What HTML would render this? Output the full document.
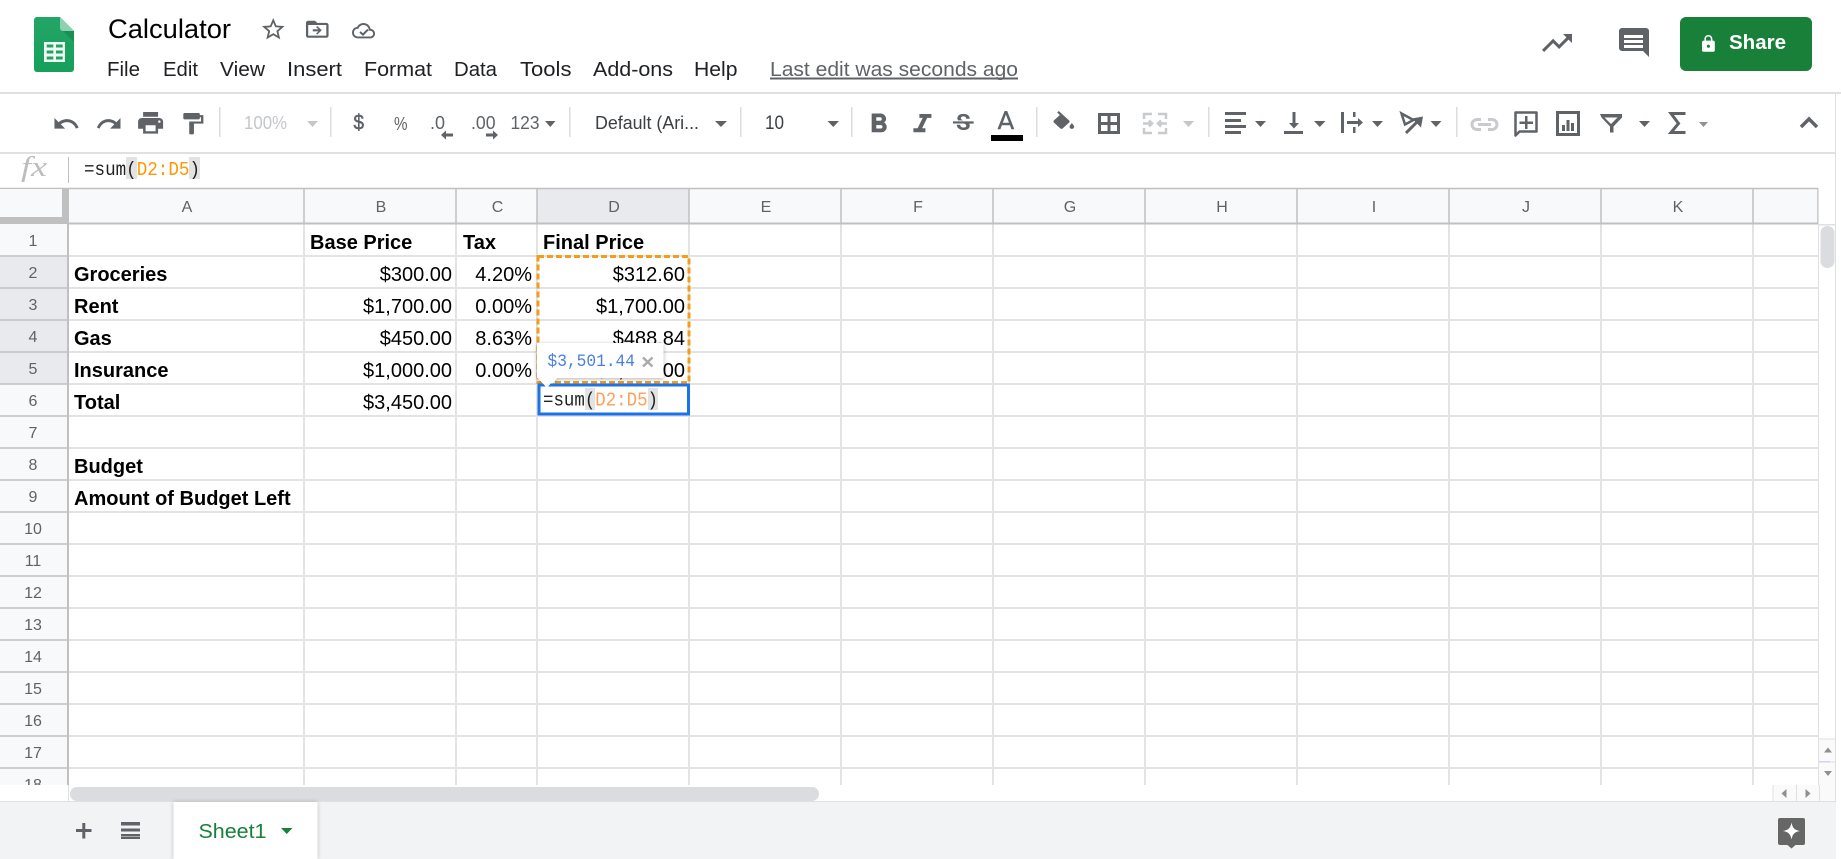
<!DOCTYPE html>
<html><head><meta charset="utf-8"><title>Calculator</title>
<style>
html,body{margin:0;padding:0;background:#fff;overflow:hidden;width:1841px;height:859px}
svg{display:block}
text{font-family:"Liberation Sans",Arial,sans-serif;white-space:pre}
.m{font-size:20px;fill:#202124}
.h{font-size:16px;fill:#5f6368;text-anchor:middle}
.b{font-size:20px;font-weight:bold;fill:#000}
.r{font-size:20px;fill:#000;text-anchor:end}
.c{font-family:"Liberation Mono",monospace!important}
.i{fill:#5f6368}
.d{fill:#c4c6ca}
</style></head><body>
<svg width="1841" height="859" viewBox="0 0 1841 859" xmlns="http://www.w3.org/2000/svg">
<defs>
<filter id="sh" x="-20%" y="-30%" width="140%" height="170%"><feDropShadow dx="0" dy="1" stdDeviation="2" flood-color="#000" flood-opacity=".3"/></filter>
<filter id="ts" x="-10%" y="-10%" width="120%" height="120%"><feDropShadow dx="0" dy="0" stdDeviation="2" flood-color="#000" flood-opacity=".22"/></filter>
<linearGradient id="lg" x1="0" y1="0" x2="0" y2="1"><stop offset="0" stop-color="#23a566"/><stop offset="1" stop-color="#16a05b"/></linearGradient>
</defs>

<!-- Logo -->
<path d="M37 17H60L74 31V69a3 3 0 0 1-3 3H37a3 3 0 0 1-3-3V20a3 3 0 0 1 3-3z" fill="url(#lg)"/>
<path d="M62 30L74 42V31z" fill="#15884f" opacity=".7"/>
<path d="M60 17L74 31H63a3 3 0 0 1-3-3z" fill="#8ed1b1"/>
<rect x="44" y="42" width="21" height="20" fill="#f1f8f4"/>
<path d="M46.700 44.500h6.600v3h-6.600zM56 44.500h6.700v3H56zM46.700 50.500h6.600v3h-6.600zM56 50.500h6.700v3H56zM46.700 56.500h6.600v3h-6.600zM56 56.500h6.700v3H56z" fill="#1fa463"/>

<!-- Title -->
<text x="108" y="38" font-size="27" fill="#000" textLength="123" lengthAdjust="spacingAndGlyphs">Calculator</text>
<path class="i" transform="translate(259.7 15.7) scale(1.13)" d="M22 9.24l-7.19-.62L12 2 9.19 8.63 2 9.24l5.46 4.73L5.82 21 12 17.27 18.18 21l-1.63-7.03L22 9.24zM12 15.4l-3.76 2.27 1-4.28-3.32-2.88 4.38-.38L12 6.1l1.71 4.04 4.38.38-3.32 2.88 1 4.28L12 15.4z"/>
<path class="i" transform="translate(303.7 16.5) scale(1.13 1.06)" d="M20 6h-8l-2-2H4c-1.1 0-2 .9-2 2v12c0 1.1.9 2 2 2h16c1.1 0 2-.9 2-2V8c0-1.1-.9-2-2-2zm0 12H4V8h16v10zM12 9l-1 1 2 2H8v2h5l-2 2 1 1 4-4z"/>
<path class="i" transform="translate(352 19.2) scale(.96)" d="M19.35 10.04C18.67 6.59 15.64 4 12 4 9.11 4 6.6 5.64 5.35 8.04 2.34 8.36 0 10.91 0 14c0 3.31 2.69 6 6 6h13c2.76 0 5-2.24 5-5 0-2.64-2.05-4.78-4.65-4.96zM19 18H6c-2.21 0-4-1.79-4-4s1.79-4 4-4h.71C7.37 7.69 9.48 6 12 6c3.04 0 5.5 2.46 5.5 5.5v.5H19c1.66 0 3 1.34 3 3s-1.34 3-3 3z"/>
<path d="M360 32l3 2.6 5-5" fill="none" stroke="#5f6368" stroke-width="2"/>

<!-- Menu -->
<text class="m" x="107" y="76" textLength="33" lengthAdjust="spacingAndGlyphs">File</text>
<text class="m" x="163" y="76" textLength="35" lengthAdjust="spacingAndGlyphs">Edit</text>
<text class="m" x="220" y="76" textLength="45" lengthAdjust="spacingAndGlyphs">View</text>
<text class="m" x="287" y="76" textLength="55" lengthAdjust="spacingAndGlyphs">Insert</text>
<text class="m" x="364" y="76" textLength="68" lengthAdjust="spacingAndGlyphs">Format</text>
<text class="m" x="454" y="76" textLength="43" lengthAdjust="spacingAndGlyphs">Data</text>
<text class="m" x="520" y="76" textLength="51.500" lengthAdjust="spacingAndGlyphs">Tools</text>
<text class="m" x="593" y="76" textLength="80" lengthAdjust="spacingAndGlyphs">Add-ons</text>
<text class="m" x="694" y="76" textLength="43.500" lengthAdjust="spacingAndGlyphs">Help</text>
<text x="770" y="76" font-size="20" fill="#5f6368" textLength="248" lengthAdjust="spacingAndGlyphs">Last edit was seconds ago</text>
<rect x="770" y="77.500" width="248" height="2" fill="#5f6368"/>

<!-- Top right -->
<path class="i" transform="translate(1539 25) scale(1.5)" d="M16 6l2.29 2.29-4.88 4.88-4-4L2 16.59 3.41 18l6-6 4 4 6.3-6.29L22 12V6z"/>
<path class="i" d="M1622 28h24a3 3 0 0 1 3 3v26l-6-6h-21a3 3 0 0 1-3-3V31a3 3 0 0 1 3-3z"/>
<path d="M1624 35h19v3h-19zM1624 40h19v3h-19zM1624 45h19v3h-19z" fill="#fff"/>
<rect x="1680" y="17" width="132" height="54" rx="6" fill="#188038"/>
<path fill="#fff" transform="translate(1698.8 34.2) scale(.8)" d="M18 8h-1V6c0-2.76-2.24-5-5-5S7 3.24 7 6v2H6c-1.1 0-2 .9-2 2v10c0 1.1.9 2 2 2h12c1.1 0 2-.9 2-2V10c0-1.1-.9-2-2-2zm-6 9c-1.1 0-2-.9-2-2s.9-2 2-2 2 .9 2 2-.9 2-2 2zm3.1-9H8.9V6c0-1.71 1.39-3.1 3.1-3.1 1.71 0 3.1 1.39 3.1 3.1v2z"/>
<text x="1729" y="49" font-size="20.500" font-weight="bold" fill="#fff" textLength="57" lengthAdjust="spacingAndGlyphs">Share</text>

<!-- Toolbar -->
<rect x="0" y="92" width="1841" height="2" fill="#e0e0e0"/>
<rect x="0" y="152" width="1836" height="2" fill="#e0e0e0"/>
<rect x="1835" y="94" width="1" height="94" fill="#e0e0e0"/>
<path class="i" transform="translate(52.1 109.7) scale(1.18)" d="M12.5 8c-2.65 0-5.05.99-6.9 2.6L2 7v9h9l-3.62-3.62c1.39-1.16 3.16-1.88 5.12-1.88 3.54 0 6.55 2.31 7.6 5.5l2.37-.78C21.08 11.03 17.15 8 12.5 8z"/>
<path class="i" transform="translate(95.2 109.7) scale(1.15 1.18)" d="M18.4 10.6C16.55 8.99 14.15 8 11.5 8c-4.65 0-8.58 3.03-9.96 7.22L3.9 16c1.05-3.19 4.05-5.5 7.6-5.5 1.95 0 3.73.72 5.12 1.88L13 16h9V7l-3.6 3.6z"/>
<path class="i" transform="translate(135.6 108.4) scale(1.25 1.2)" d="M19 8H5c-1.66 0-3 1.34-3 3v6h4v4h12v-4h4v-6c0-1.66-1.34-3-3-3zm-3 11H8v-5h8v5zm3-7c-.55 0-1-.45-1-1s.45-1 1-1 1 .45 1 1-.45 1-1 1zm-1-9H6v4h12V3z"/>
<path class="i" transform="translate(178.6 110.8) scale(1.18 1.07)" d="M18 4V3c0-.55-.45-1-1-1H5c-.55 0-1 .45-1 1v4c0 .55.45 1 1 1h12c.55 0 1-.45 1-1V6h1v4H9v11c0 .55.45 1 1 1h2c.55 0 1-.45 1-1v-9h8V4h-3z"/>
<g fill="#dadce0"><rect x="219" y="107" width="1.5" height="30"/><rect x="330" y="107" width="1.5" height="30"/><rect x="569" y="107" width="1.5" height="30"/><rect x="740" y="107" width="1.5" height="30"/><rect x="851" y="107" width="1.5" height="30"/><rect x="1036" y="107" width="1.5" height="30"/><rect x="1208" y="107" width="1.5" height="30"/><rect x="1456" y="107" width="1.5" height="30"/></g>
<text x="244" y="129" font-size="18" fill="#c4c6ca" textLength="43" lengthAdjust="spacingAndGlyphs">100%</text>
<path class="d" d="M307 121h11l-5.5 6z"/>
<text x="353.500" y="129.500" font-size="21" fill="#5f6368" stroke="#5f6368" stroke-width=".5" textLength="10.500" lengthAdjust="spacingAndGlyphs">$</text>
<text x="394" y="130" font-size="18" fill="#5f6368" textLength="13.500" lengthAdjust="spacingAndGlyphs">%</text>
<text x="430" y="129" font-size="18" fill="#5f6368" textLength="15" lengthAdjust="spacingAndGlyphs">.0</text>
<path class="i" d="M441 135l5-4.500v3h7v3h-7v3z"/>
<text x="471" y="129" font-size="18" fill="#5f6368" textLength="24.500" lengthAdjust="spacingAndGlyphs">.00</text>
<path class="i" d="M498 135l-5-4.500v3h-7v3h7v3z"/>
<text x="510.500" y="129" font-size="18" fill="#5f6368" textLength="29" lengthAdjust="spacingAndGlyphs">123</text>
<path class="i" d="M545 121h10.500l-5.250 6z"/>
<text x="595" y="129" font-size="18" fill="#3c4043" textLength="104" lengthAdjust="spacingAndGlyphs">Default (Ari...</text>
<path class="i" d="M715 121h12l-6 6z"/>
<text x="765" y="129" font-size="19" fill="#3c4043" textLength="19" lengthAdjust="spacingAndGlyphs">10</text>
<path class="i" d="M827.500 121h11.500l-5.750 6z"/>
<path class="i" transform="translate(862.5 108.6) scale(1.35 1.3)" stroke="#5f6368" stroke-width=".4" d="M15.6 10.79c.97-.67 1.65-1.77 1.65-2.79 0-2.26-1.75-4-4-4H7v14h7.04c2.09 0 3.71-1.7 3.71-3.79 0-1.52-.86-2.82-2.15-3.42zM10 6.500h3c.83 0 1.500.67 1.500 1.500s-.67 1.500-1.500 1.500h-3v-3zm3.500 9H10v-3h3.500c.83 0 1.500.67 1.500 1.500s-.67 1.500-1.500 1.500z"/>
<path class="i" transform="translate(904.4 108.800) scale(1.500 1.300)" d="M10 4v3h2.210l-3.420 8H6v3h8v-3h-2.210l3.420-8H18V4z"/>
<path class="i" transform="translate(949.5 110.6) scale(1.15 1.08)" d="M7.240 8.750c-.26-.48-.39-1.030-.39-1.670 0-.61.13-1.160.4-1.670.26-.5.63-.93 1.110-1.290.48-.35 1.050-.63 1.700-.83.66-.19 1.390-.29 2.180-.29.81 0 1.540.11 2.210.34.66.22 1.230.54 1.690.94.47.4.83.88 1.080 1.430.25.55.38 1.150.38 1.810h-3.010c0-.31-.05-.59-.15-.85-.09-.27-.24-.49-.44-.68-.2-.19-.45-.33-.75-.44-.3-.1-.66-.16-1.060-.16-.39 0-.74.04-1.030.13-.29.09-.53.21-.72.36-.19.16-.34.34-.44.55-.1.21-.15.43-.15.66 0 .48.25.88.74 1.210.38.25.77.48 1.410.7H7.390c-.05-.08-.11-.17-.15-.25zM21 12v-2H3v2h9.620c.18.07.4.14.55.2.37.17.66.34.87.51.21.17.35.36.43.57.07.2.11.43.11.69 0 .23-.05.45-.14.66-.09.2-.23.38-.42.53-.19.15-.42.26-.71.35-.29.08-.63.13-1.010.13-.43 0-.83-.04-1.180-.13s-.66-.23-.91-.42c-.25-.19-.45-.44-.59-.75-.14-.31-.25-.76-.25-1.210H6.400c0 .55.08 1.130.24 1.580.16.45.37.85.65 1.210.28.35.6.66.98.92.37.26.78.48 1.220.65.44.17.9.3 1.380.39.48.08.96.13 1.440.13.8 0 1.530-.09 2.180-.28s1.210-.45 1.670-.79c.46-.34.82-.77 1.070-1.270s.38-1.070.38-1.710c0-.6-.1-1.140-.31-1.610-.05-.11-.11-.23-.17-.33H21z"/>
<path class="i" transform="translate(990.3 107.100) scale(1.300)" d="M11 3L5.500 17h2.250l1.120-3h6.250l1.120 3h2.250L13 3h-2zm-1.380 9L12 5.670 14.380 12H9.620z"/>
<rect x="991" y="135" width="32" height="6" fill="#000"/>
<path class="i" transform="translate(1050 111) scale(1.150 1.050)" d="M16.560 8.940L7.620 0 6.210 1.410l2.380 2.380-5.150 5.150c-.59.59-.59 1.540 0 2.120l5.500 5.500c.29.29.68.44 1.060.44s.77-.15 1.060-.44l5.500-5.500c.59-.58.59-1.530 0-2.120zM19 11.500s-2 2.170-2 3.500c0 1.100.9 2 2 2s2-.9 2-2c0-1.330-2-3.500-2-3.500z"/>
<path d="M1099.500 114.500h19v18h-19zM1109 114.500v18M1099.500 123.500h19" fill="none" stroke="#5f6368" stroke-width="3"/>
<g fill="none" stroke="#c8cacd" stroke-width="2.500"><path d="M1144 119v-5h8M1158 114h8v5M1144 128v5h8M1158 133h8v-5"/><path d="M1143 123.500h8M1159 123.500h8M1149 120.500l3 3-3 3M1161 120.500l-3 3 3 3"/></g>
<path class="d" d="M1183 121h11l-5.500 6z"/>
<path class="i" d="M1225 112h21v3h-21zM1225 119h16v3h-16zM1225 125h21v3h-21zM1225 131h16v3h-16z"/>
<path class="i" d="M1255 121h11l-5.500 6z"/>
<path class="i" d="M1284 131h19v3h-19zM1292.500 112h3v11h3.500l-5 5.500-5-5.500h3.500z"/>
<path class="i" d="M1314 121h11.500l-5.750 6z"/>
<path class="i" d="M1341 112h3v21h-3zM1353 112h2.500v5h-2.500zM1353 127h2.500v6h-2.500zM1347 121h11v-3l5 4.500-5 4.500v-3h-11z"/>
<path class="i" d="M1372 121h11l-5.500 6z"/>
<path d="M1401.500 113.500l12 6.500-8.500 4.500z" fill="none" stroke="#5f6368" stroke-width="2.500"/>
<path d="M1406 133l11-11" fill="none" stroke="#5f6368" stroke-width="3"/>
<path class="i" d="M1423 116.500l-11 2 9 9z"/>
<path class="i" d="M1430.500 121h11l-5.500 6z"/>
<g fill="none" stroke="#c8cacd" stroke-width="3"><path d="M1481 119.500h-4a5 5 0 0 0 0 10h4M1488 119.500h4a5 5 0 0 1 0 10h-4"/><path d="M1478 124.500h13"/></g>
<path d="M1515.500 112.500h21v19h-17l-4 4z" fill="none" stroke="#5f6368" stroke-width="2.500" stroke-linejoin="round"/>
<path class="i" d="M1525 116h2.500v5.500h5.500v2.500h-5.500v5h-2.500v-5h-5.500v-2.500h5.500z"/>
<rect x="1557.500" y="112.500" width="21" height="22" fill="none" stroke="#5f6368" stroke-width="3"/>
<path class="i" d="M1562 125h3v6h-3zM1566.500 120h3v11h-3zM1571 123h3v8h-3z"/>
<path class="i" d="M1600 114h22v3.500l-8.500 9v6h-3.500v-6l-8.500-9z M1604.500 117.500l6.500 6.500 6.500-6.500z" fill-rule="evenodd"/>
<path class="i" d="M1639 121h11l-5.500 6z"/>
<path d="M1684 115v-1.500h-13l7.500 10-7.500 9h13v-1.500" fill="none" stroke="#5f6368" stroke-width="3"/>
<path d="M1699 122h9l-4.500 5z" fill="#909296"/>
<path d="M1801 127l8-8 8 8" fill="none" stroke="#5f6368" stroke-width="3.500"/>

<!-- Formula bar -->
<text x="21" y="176" font-size="29" fill="#bdbdbd" style="font-family:'Liberation Serif',serif;font-style:italic" textLength="26" lengthAdjust="spacingAndGlyphs">fx</text>
<rect x="68" y="157" width="1" height="26" fill="#c0c0c0"/>
<rect x="126" y="157" width="11" height="22" fill="#e3e3e3"/>
<rect x="189" y="157" width="11" height="22" fill="#e3e3e3"/>
<text class="c" x="84" y="175" font-size="19.500" fill="#222" textLength="116" lengthAdjust="spacingAndGlyphs">=sum(<tspan fill="#ff9800">D2:D5</tspan>)</text>

<!-- Grid background -->
<rect x="0" y="188" width="1818" height="36" fill="#f8f9fa"/>
<rect x="0" y="224" width="68" height="561" fill="#f8f9fa"/>
<rect x="537" y="189" width="152" height="34" fill="#e8eaed"/>
<rect x="0" y="257" width="67" height="127" fill="#e8eaed"/>

<!-- grid lines -->
<path fill="none" stroke="#e2e3e3" stroke-width="2" d="M68 256H1818M68 288H1818M68 320H1818M68 352H1818M68 384H1818M68 416H1818M68 448H1818M68 480H1818M68 512H1818M68 544H1818M68 576H1818M68 608H1818M68 640H1818M68 672H1818M68 704H1818M68 736H1818M68 768H1818M304 224V785M456 224V785M537 224V785M689 224V785M841 224V785M993 224V785M1145 224V785M1297 224V785M1449 224V785M1601 224V785M1753 224V785"/>
<path fill="none" stroke="#c0c0c0" stroke-width="1.500" d="M0 188.500H1818M0 256H68M0 288H68M0 320H68M0 352H68M0 384H68M0 416H68M0 448H68M0 480H68M0 512H68M0 544H68M0 576H68M0 608H68M0 640H68M0 672H68M0 704H68M0 736H68M0 768H68M304 188V224M456 188V224M537 188V224M689 188V224M841 188V224M993 188V224M1145 188V224M1297 188V224M1449 188V224M1601 188V224M1753 188V224M1818 188V224"/>
<path fill="none" stroke="#c0c0c0" stroke-width="2" d="M68 223.500H1818"/>
<rect x="67" y="188" width="2" height="597" fill="#c0c0c0"/>
<rect x="62" y="189" width="6" height="35" fill="#c0c0c0"/>
<rect x="0" y="217" width="68" height="7" fill="#c0c0c0"/>
<rect x="0" y="188" width="62" height="29" fill="#f8f9fa"/>
<rect x="0" y="188" width="62" height="1" fill="#c0c0c0"/>

<!-- col headers -->
<text class="h" x="187" y="212">A</text><text class="h" x="381" y="212">B</text><text class="h" x="497.500" y="212">C</text><text class="h" x="614" y="212">D</text><text class="h" x="766" y="212">E</text><text class="h" x="918" y="212">F</text><text class="h" x="1070" y="212">G</text><text class="h" x="1222" y="212">H</text><text class="h" x="1374" y="212">I</text><text class="h" x="1526" y="212">J</text><text class="h" x="1678" y="212">K</text>
<!-- row headers -->
<text class="h" x="33" y="246">1</text><text class="h" x="33" y="278">2</text><text class="h" x="33" y="310">3</text><text class="h" x="33" y="342">4</text><text class="h" x="33" y="374">5</text><text class="h" x="33" y="406">6</text><text class="h" x="33" y="438">7</text><text class="h" x="33" y="470">8</text><text class="h" x="33" y="502">9</text><text class="h" x="33" y="534">10</text><text class="h" x="33" y="566">11</text><text class="h" x="33" y="598">12</text><text class="h" x="33" y="630">13</text><text class="h" x="33" y="662">14</text><text class="h" x="33" y="694">15</text><text class="h" x="33" y="726">16</text><text class="h" x="33" y="758">17</text><text class="h" x="33" y="790">18</text>

<!-- cells -->
<text class="b" x="310" y="249">Base Price</text><text class="b" x="463" y="249">Tax</text><text class="b" x="543" y="249">Final Price</text>
<text class="b" x="74" y="281">Groceries</text><text class="b" x="74" y="313">Rent</text><text class="b" x="74" y="345">Gas</text><text class="b" x="74" y="377">Insurance</text><text class="b" x="74" y="409">Total</text><text class="b" x="74" y="473">Budget</text><text class="b" x="74" y="505">Amount of Budget Left</text>
<text class="r" x="452" y="281">$300.00</text><text class="r" x="452" y="313">$1,700.00</text><text class="r" x="452" y="345">$450.00</text><text class="r" x="452" y="377">$1,000.00</text><text class="r" x="452" y="409">$3,450.00</text>
<text class="r" x="532" y="281">4.20%</text><text class="r" x="532" y="313">0.00%</text><text class="r" x="532" y="345">8.63%</text><text class="r" x="532" y="377">0.00%</text>
<text class="r" x="685" y="281">$312.60</text><text class="r" x="685" y="313">$1,700.00</text><text class="r" x="685" y="345">$488.84</text><text class="r" x="685" y="377">$1,000.00</text>

<!-- dashed range -->
<rect x="538" y="256.500" width="151" height="126" fill="none" stroke="#f39c1f" stroke-width="3" stroke-dasharray="6 3"/>

<!-- tooltip -->
<path d="M537 343H663.500V378H557L547 390L539 378H537z" fill="#fff" filter="url(#sh)"/>
<text class="c" x="547.500" y="366" font-size="17.500" fill="#4a7fe0" textLength="87.500" lengthAdjust="spacingAndGlyphs">$3,501.44</text>
<path d="M643 357.500l9.500 9M652.500 357.500l-9.500 9" stroke="#ababab" stroke-width="2.500" fill="none"/>

<!-- active cell -->
<rect x="539" y="385" width="149.500" height="29" fill="#fff" stroke="#1a73e8" stroke-width="3"/>
<rect x="585" y="388" width="10" height="22" fill="#e3e3e3"/>
<rect x="648" y="388" width="10" height="22" fill="#e3e3e3"/>
<text class="c" x="543" y="405.500" font-size="19.500" fill="#222" textLength="115" lengthAdjust="spacingAndGlyphs">=sum(<tspan fill="#ff9f5a">D2:D5</tspan>)</text>
<path d="M538 378H555L547 388z" fill="#fff"/>

<!-- vertical scrollbar -->
<rect x="1818.500" y="188" width="17.500" height="597" fill="#fff"/>
<rect x="1818" y="188" width="1" height="597" fill="#e0e0e0"/>
<rect x="1835" y="188" width="1" height="614" fill="#e0e0e0"/>
<rect x="1818" y="224" width="17" height="1.500" fill="#e0e0e0"/>
<rect x="1820.500" y="226" width="14" height="42" rx="7" fill="#dadce0"/>
<rect x="1819" y="739" width="16" height="46" fill="#fafafa"/>
<path d="M1818 739H1836M1818 762H1836" stroke="#e0e0e0" stroke-width="1"/>
<rect x="1819" y="761" width="11" height="1.500" fill="#d0d4f0"/>
<path d="M1824 752.500h8l-4-5z" fill="#8f8f8f"/>
<path d="M1824 771h8l-4 5z" fill="#8f8f8f"/>

<!-- horizontal scrollbar -->
<rect x="0" y="785" width="1836" height="17" fill="#fff"/>
<rect x="68" y="785" width="1" height="17" fill="#e0e0e0"/>
<rect x="70" y="787" width="749" height="14" rx="7" fill="#dadce0"/>
<rect x="1773" y="785" width="63" height="17" fill="#fafafa"/>
<path d="M1773 785v17M1796.500 785v17M1819.500 785v17M1835.500 785v17" stroke="#e0e0e0" stroke-width="1"/>
<path d="M1786.500 789v9l-5-4.500z" fill="#8f8f8f"/>
<path d="M1805.500 789v9l5-4.500z" fill="#8f8f8f"/>

<!-- footer -->
<rect x="0" y="802" width="1836" height="57" fill="#f1f3f4"/>
<rect x="0" y="801" width="1836" height="1" fill="#e0e0e0"/>
<path d="M76 829h15.500v3H85.300v6.500h-3V832H76zM82.300 823h3v6h-3z" fill="#5f6368"/>
<path class="i" d="M121 822h19v3.500h-19zM121 828.500h19v3h-19zM121 834h19v2.500h-19zM121 837h19v2h-19z"/>
<rect x="173.500" y="802" width="144" height="57" fill="#fff" filter="url(#ts)"/>
<text x="198.500" y="838" font-size="20.500" fill="#188038" textLength="68" lengthAdjust="spacingAndGlyphs">Sheet1</text>
<path d="M281 828h11.500l-5.750 6z" fill="#188038"/>
<path fill="#666" d="M1780 818h23a2 2 0 0 1 2 2v23a2 2 0 0 1-2 2h-7.500l-4 3.500-4-3.500H1780a2 2 0 0 1-2-2v-23a2 2 0 0 1 2-2z"/>
<path d="M1791.500 822.500c1 5.500 3 7.500 8.500 8.500-5.500 1-7.500 3-8.500 8.500-1-5.500-3-7.500-8.500-8.500 5.500-1 7.500-3 8.500-8.500z" fill="#fff"/>
</svg>
</body></html>
